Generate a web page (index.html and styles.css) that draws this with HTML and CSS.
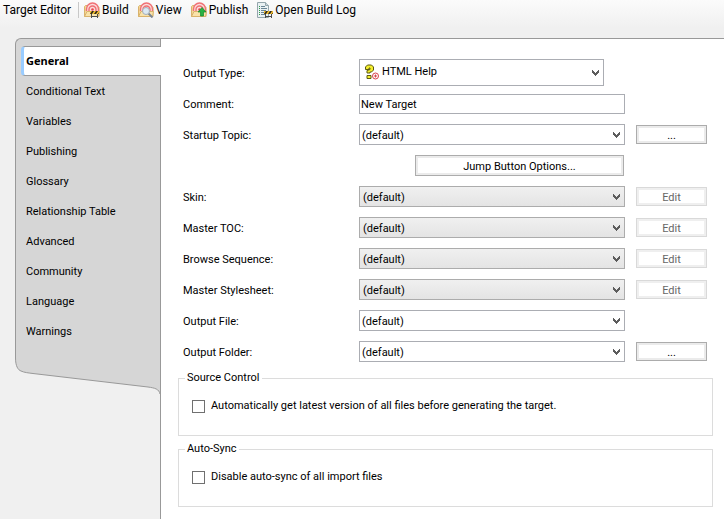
FILE: index.html
```html
<!DOCTYPE html>
<html lang="en">
<head>
<meta charset="utf-8">
<title>Target Editor</title>
<link rel="stylesheet" href="styles.css">
</head>
<body>
<svg class="defs" aria-hidden="true">
  <defs>
    <symbol id="chevron" viewBox="0 0 7 6"><path d="M0 0h1v1h1v1h1v1h1V2h1V1h1V0h1v3H6v1H5v1H4v1H3V5H2V4H1V3H0z" fill="#5c5c5c"/></symbol>
    <symbol id="folder" viewBox="0 0 16 16">
      <path d="M.5 14.500V4.500l1-1h4l1 1.500h8.500v9.500z" fill="#f3d795" stroke="#d9b36c"/>
      <path d="M2.500 9V7a6 6 0 0 1 12 0v2z" fill="#fbdcdc"/>
      <path d="M2.500 9V7a6 6 0 0 1 12 0v2M5 9V7.500a3.500 3.500 0 0 1 7 0V9" fill="none" stroke="#f07074" stroke-width="1.400"/>
      <circle cx="8.500" cy="7.500" r="1.300" fill="#e9484e"/>
      <path d="M.5 14.500 3 9.500h12.500l-1 5z" fill="#f9e3aa" stroke="#d9b36c"/>
    </symbol>
    <symbol id="barrier" viewBox="0 0 9 7">
      <path d="M1.500 3v4M7.500 3v4M1 5.500h7" fill="none" stroke="#4d4d4d"/>
      <path d="M0 0h9v3H0z" fill="#f2bd2c"/>
      <path d="M0 3 2 0h2L2 3zM4 3l2-3h2L6 3zM8 3l1-1.500V3z" fill="#302a20"/>
    </symbol>
  </defs>
</svg>

<header class="toolbar">
  <h1>Target Editor</h1>
  <button type="button"><svg viewBox="0 0 16 16"><use href="#folder"/><use href="#barrier" x="6" y="9" width="9" height="7"/></svg>Build</button>
  <button type="button"><svg viewBox="0 0 16 16"><use href="#folder"/><path d="m10 11 4.500 4.500" stroke="#7b8794" stroke-width="2"/><circle cx="8" cy="9" r="3.500" fill="#dbe9f3" stroke="#a3adb8"/></svg>View</button>
  <button type="button"><svg viewBox="0 0 16 16"><use href="#folder"/><path d="m11 5.500 4 4.500h-2.500v4h-3v-4H7z" fill="#27b343" stroke="#158a2d" stroke-width=".7"/></svg>Publish</button>
  <button type="button"><svg viewBox="0 0 16 16"><path d="M.5.500h8l3 3v12H.5z" fill="#eaf1f3" stroke="#94a6ac"/><path d="M8.500.500v3h3" fill="#c9d6da" stroke="#94a6ac"/><path d="M2 4.500h1M2 6.500h1M2 8.500h1M2 10.500h1M2 12.500h1" stroke="#2f9c4c"/><path d="M4 4.500h4M4 6.500h6M4 8.500h5M4 10.500h4M4 12.500h4" stroke="#6a8594"/><use href="#barrier" x="7" y="9" width="9" height="7"/></svg>Open Build Log</button>
</header>

<main class="editor">
  <nav class="side">
    <div class="tabs">
      <a class="active" href="#general">General</a>
      <a href="#conditional">Conditional Text</a>
      <a href="#variables">Variables</a>
      <a href="#publishing">Publishing</a>
      <a href="#glossary">Glossary</a>
      <a href="#relationship">Relationship Table</a>
      <a href="#advanced">Advanced</a>
      <a href="#community">Community</a>
      <a href="#language">Language</a>
      <a href="#warnings">Warnings</a>
    </div>
    <svg class="tail" viewBox="0 0 145 37" preserveAspectRatio="none" aria-hidden="true"><path d="M.5 0C.5 8 3 12 6 13c3 1.500 8 2 12 2.500L133 29c7 1 11 2 12 7V0z" fill="#d6d6d6"/><path d="M.5 0C.5 8 3 12 6 13c3 1.500 8 2 12 2.500L133 29c7 1 11 2 12 7" fill="none" stroke="#999"/></svg>
  </nav>

  <form class="panel" id="general">
    <div class="row">
      <label for="type">Output Type:</label>
      <div class="combo large">
        <select id="type"><option>HTML Help</option></select>
        <svg class="kind" viewBox="0 0 16 16"><path d="M1.500 5.500V3l2-2h4l2 2v3l-2 2H6v1H3V6.500l3-1V4H5v1.500z" fill="#f4ee2c" stroke="#5d5a10"/><path d="M3 11.500h4v3H3z" fill="#f4ee2c" stroke="#5d5a10"/><circle cx="11.500" cy="12" r="3" fill="#fff" stroke="#d8414c"/><path d="M10 12h3M11.500 10.500v3" stroke="#d8414c"/></svg>
        <svg class="arrow"><use href="#chevron"/></svg>
      </div>
    </div>
    <div class="row">
      <label for="comment">Comment:</label>
      <input id="comment" type="text" value="New Target">
    </div>
    <div class="row">
      <label for="startup">Startup Topic:</label>
      <div class="combo"><select id="startup"><option>(default)</option></select><svg class="arrow"><use href="#chevron"/></svg></div>
      <button type="button" aria-label="Browse for startup topic">...</button>
    </div>
    <div class="row">
      <button class="jump" type="button">Jump Button Options...</button>
    </div>
    <div class="row">
      <label for="skin">Skin:</label>
      <div class="combo shaded"><select id="skin"><option>(default)</option></select><svg class="arrow"><use href="#chevron"/></svg></div>
      <button type="button" disabled>Edit</button>
    </div>
    <div class="row">
      <label for="toc">Master TOC:</label>
      <div class="combo shaded"><select id="toc"><option>(default)</option></select><svg class="arrow"><use href="#chevron"/></svg></div>
      <button type="button" disabled>Edit</button>
    </div>
    <div class="row">
      <label for="browse">Browse Sequence:</label>
      <div class="combo shaded"><select id="browse"><option>(default)</option></select><svg class="arrow"><use href="#chevron"/></svg></div>
      <button type="button" disabled>Edit</button>
    </div>
    <div class="row">
      <label for="sheet">Master Stylesheet:</label>
      <div class="combo shaded"><select id="sheet"><option>(default)</option></select><svg class="arrow"><use href="#chevron"/></svg></div>
      <button type="button" disabled>Edit</button>
    </div>
    <div class="row">
      <label for="file">Output File:</label>
      <div class="combo"><select id="file"><option>(default)</option></select><svg class="arrow"><use href="#chevron"/></svg></div>
    </div>
    <div class="row">
      <label for="folder-path">Output Folder:</label>
      <div class="combo"><select id="folder-path"><option>(default)</option></select><svg class="arrow"><use href="#chevron"/></svg></div>
      <button type="button" aria-label="Browse for output folder">...</button>
    </div>
    <fieldset>
      <legend>Source Control</legend>
      <label><input type="checkbox">Automatically get latest version of all files before generating the target.</label>
    </fieldset>
    <fieldset>
      <legend>Auto-Sync</legend>
      <label><input type="checkbox">Disable auto-sync of all import files</label>
    </fieldset>
  </form>
</main>
</body>
</html>
```

FILE: styles.css
```css
* { box-sizing: border-box; }

body {
  margin: 0;
  min-height: 100vh;
  display: flex;
  flex-direction: column;
  background: #f0f0f0;
  color: #000;
  font: 11px/14px Roboto, "Noto Sans", sans-serif;
}

button, input, select { font: inherit; color: inherit; }

.defs { position: absolute; width: 0; height: 0; }

.toolbar {
  display: flex;
  align-items: center;
  height: 38px;
  padding: 0 3px 18px;
  background: linear-gradient(#fbfbfb, #f0f0f0 28px);
  font-size: 12px;
  line-height: 16px;
}

.toolbar h1 {
  margin: 0 5px 0 0;
  padding-right: 7px;
  border-right: 1px solid #c8c8c8;
  font: inherit;
  white-space: nowrap;
}

.toolbar button {
  display: flex;
  align-items: center;
  gap: 2px;
  margin-right: 9px;
  padding: 0;
  border: 0;
  background: none;
  white-space: nowrap;
}

.toolbar svg { width: 16px; height: 16px; flex: none; }

.editor {
  flex: 1;
  display: flex;
  padding-left: 15px;
}

.side {
  position: relative;
  z-index: 1;
  flex: none;
  width: 145px;
}

.tabs {
  display: flex;
  flex-direction: column;
  padding: 7px 0 12px 5px;
  border: solid #999;
  border-width: 1px 0 0 1px;
  border-top-left-radius: 6px;
  background: #d6d6d6;
}

.tabs a {
  height: 30px;
  padding-left: 5px;
  color: #000;
  line-height: 32px;
  text-decoration: none;
}

.tabs .active {
  margin-right: -1px;
  padding-left: 2px;
  border: solid #999;
  border-width: 1px 0;
  border-left: 3px solid #9cf;
  border-radius: 4px 0 0 4px;
  background: #fff;
  font-family: "Noto Sans", sans-serif;
  font-weight: bold;
  line-height: 28px;
}

.tail { display: block; width: 100%; height: 37px; }

.panel {
  flex: 1;
  min-width: 0;
  padding: 18px 11px 12px 17px;
  border: solid #999;
  border-width: 1px 0 0 1px;
  background: #fff;
}

.row {
  display: grid;
  grid-template-columns: 165px minmax(120px, 266px) 71px;
  column-gap: 11px;
  align-items: center;
  height: 31px;
  padding-left: 5px;
}

.row label { padding-top: 2px; }

.combo { position: relative; height: 21px; }

.combo select, .row > input {
  display: block;
  width: 100%;
  height: 100%;
  margin: 0;
  padding: 2px 16px 0 2px;
  border: 1px solid #abadb3;
  border-radius: 0;
  background: #fff;
  appearance: none;
}

.row > input { height: 20px; padding: 2px 1px 0; }
.shaded select { padding-left: 3px; border-color: #acacac; background: linear-gradient(#f0f0f0, #e4e4e4); }

.arrow {
  position: absolute;
  top: 8px;
  right: 5px;
  width: 7px;
  height: 6px;
  pointer-events: none;
}

.large { height: 27px; margin-right: 21px; }
.large select { padding: 0 16px 1px 22px; }
.large .arrow { top: 11px; }

.kind {
  position: absolute;
  top: 5px;
  left: 5px;
  width: 16px;
  height: 16px;
  pointer-events: none;
}

.row button {
  height: 19px;
  padding: 2px 0 0;
  border: 1px solid #acacac;
  background: #fff;
  box-shadow: inset 0 0 0 2px #ebebeb;
}

.row button:disabled { border-color: #d9d9d9; color: #666; box-shadow: inset 0 0 0 2px #efefef; }
.row .jump { grid-column: 2; height: 21px; margin: 0 1px 0 56px; }

fieldset {
  height: 65px;
  margin: 4px 0 6px;
  padding: 14px 13px;
  border: 1px solid #dcdcdc;
}

legend { margin-left: -7px; padding: 0 2px; }

fieldset label { display: flex; align-items: center; gap: 6px; }

fieldset input {
  flex: none;
  width: 13px;
  height: 13px;
  margin: 0;
  border: 1px solid #707070;
  background: #fff;
  appearance: none;
}

fieldset input:checked { background: #707070; box-shadow: inset 0 0 0 2px #fff; }
```
